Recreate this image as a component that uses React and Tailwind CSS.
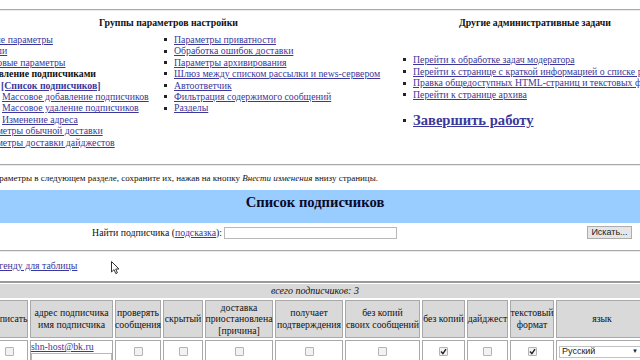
import React from "react";

const link = "text-[#3b379c] underline";

const Bullet = () => (
  <span className="w-[14px] h-[11.4px] shrink-0 flex items-center pl-[4px]">
    <span className="w-[3px] h-[3px] bg-[#222]" />
  </span>
);

const Cb = ({ checked }) => (
  <span className="w-[9px] h-[9px] border border-[#b4b4b4] bg-[#f2f2f2] rounded-[1px] flex items-center justify-center">
    {checked && (
      <svg width="7" height="7" viewBox="0 0 7 7">
        <path d="M1 3.6 L2.9 5.6 L6 1.2" stroke="#222" strokeWidth="1.4" fill="none" />
      </svg>
    )}
  </span>
);

const Hr = ({ className = "" }) => (
  <div className={"h-[2px] border-t border-[#a8a8a8] border-b border-b-[#ececec] " + className} />
);

const headers = [
  ["отписать"],
  ["адрес подписчика", "имя подписчика"],
  ["проверять", "сообщения"],
  ["скрытый"],
  ["доставка", "приостановлена", "[причина]"],
  ["получает", "подтверждения"],
  ["без копий", "своих сообщений"],
  ["без копий"],
  ["дайджест"],
  ["текстовый", "формат"],
  ["язык"],
];

const checks = [false, null, false, false, false, false, false, true, false, true, null];

export default function App() {
  return (
    <div className="w-[640px] h-[360px] overflow-hidden bg-white relative font-['Liberation_Serif',serif] text-[9.8px] leading-[11.4px] text-[#111]">
      <div className="h-[9px]" />
      <Hr className="w-[640px]" />

      {/* top navigation */}
      <div className="flex -ml-[30px] mt-[6px]">
        <div className="w-[429px] shrink-0">
          <div className="w-[397px] text-center font-bold leading-[12px]">Группы параметров настройки</div>
          <div className="flex mt-[5px]">
            <ul className="w-[190px] shrink-0 pl-[6px] whitespace-nowrap">
              <li><a className={link}>Общие параметры</a></li>
              <li><a className={link}>Пароли</a></li>
              <li><a className={link}>Языковые параметры</a></li>
              <li>
                <span className="font-bold">Управление подписчиками</span>
                <ul className="pl-[26px]">
                  <li className="-ml-[1px]"><a className={link + " font-bold"}>[Список подписчиков]</a></li>
                  <li><a className={link}>Массовое добавление подписчиков</a></li>
                  <li><a className={link}>Массовое удаление подписчиков</a></li>
                  <li><a className={link}>Изменение адреса</a></li>
                </ul>
              </li>
              <li><a className={link}>Параметры обычной доставки</a></li>
              <li><a className={link}>Параметры доставки дайджестов</a></li>
            </ul>
            <ul className="w-[239px] shrink-0 whitespace-nowrap">
              {[
                "Параметры приватности",
                "Обработка ошибок доставки",
                "Параметры архивирования",
                "Шлюз между списком рассылки и news-сервером",
                "Автоответчик",
                "Фильтрация содержимого сообщений",
                "Разделы",
              ].map((t) => (
                <li key={t} className="flex">
                  <Bullet />
                  <a className={link}>{t}</a>
                </li>
              ))}
            </ul>
          </div>
        </div>
        <div className="w-[272px] shrink-0">
          <div className="text-center font-bold leading-[12px]">Другие административные задачи</div>
          <ul className="mt-[25px] leading-[11.7px] whitespace-nowrap">
            {[
              "Перейти к обработке задач модератора",
              "Перейти к странице с краткой информацией о списке рассылки",
              "Правка общедоступных HTML-страниц и текстовых файлов",
              "Перейти к странице архива",
            ].map((t) => (
              <li key={t} className="flex">
                <Bullet />
                <a className={link}>{t}</a>
              </li>
            ))}
          </ul>
          <div className="flex items-center mt-[11px]">
            <Bullet />
            <a className={link + " text-[14.6px] leading-[17px] font-bold"}>Завершить работу</a>
          </div>
        </div>
      </div>

      <Hr className="w-[640px] mt-[16px]" />

      <p className="mt-[6px] text-[9px] leading-[12px] whitespace-nowrap -ml-[49px]">
        Измените параметры в следующем разделе, сохраните их, нажав на кнопку <em>Внести изменения</em> внизу страницы.
      </p>

      <div className="mt-[6px] h-[33px] bg-[#99ccff] pt-[4px] text-center">
        <span className="text-[14.6px] leading-[17px] font-bold text-[#0a0a2a] mr-[10px]">Список подписчиков</span>
      </div>

      <div className="mt-[3px] h-[13px] flex items-center">
        <div className="w-[222px] text-right leading-[12px] whitespace-nowrap">
          Найти подписчика (<a className={link}>подсказка</a>):
        </div>
        <div className="ml-[2px] w-[173px] h-[12px] border border-[#b8b8b8] bg-white" />
        <div className="ml-auto mr-[8px] h-[13px] w-[45px] border border-[#adadad] bg-[#e6e6e6] font-['Liberation_Sans',sans-serif] text-[9px] leading-[11px] text-center text-[#222]">
          Искать...
        </div>
      </div>

      <Hr className="w-[640px] mt-[11px]" />

      <div className="mt-[8px] leading-[12px] whitespace-nowrap -ml-[50px]">
        <a className={link}>Показать легенду для таблицы</a>
      </div>

      {/* table */}
      <div className="mt-[9px] -ml-[12px] w-[664px] border-t-2 border-l border-[#9a9a9a] pl-[1px] pt-[1px] bg-white">
        <div className="grid grid-cols-[38px_83px_46px_40px_68px_68px_75px_43px_41px_44px_92px] gap-[2px]">
          <div className="col-span-11 h-[14px] bg-[#d9d9d9] text-center italic text-[10px] leading-[13px] pr-[8px]">
            всего подписчиков: 3
          </div>
          {headers.map((h, i) => (
            <div
              key={i}
              className="h-[38px] bg-[#d9d9d9] border border-[#a9a9a9] flex flex-col items-center justify-center text-[9.8px] leading-[11.6px] whitespace-nowrap text-center"
            >
              {h.map((l) => (
                <span key={l}>{l}</span>
              ))}
            </div>
          ))}
          {checks.map((c, i) => {
            if (i === 1) {
              return (
                <div key={i} className="h-[30px] border border-[#a9a9a9] bg-white">
                  <a className={link + " leading-[12px] block"}>shn-host@bk.ru</a>
                  <div className="w-[81px] h-[16px] border border-[#b8b8b8] bg-white" />
                </div>
              );
            }
            if (i === 10) {
              return (
                <div key={i} className="h-[30px] border border-[#a9a9a9] bg-white pt-[5px] pl-[2px]">
                  <div className="w-[84px] h-[12px] border border-[#c2c2c2] bg-white flex items-center justify-between px-[2px] font-['Liberation_Sans',sans-serif] text-[9px] text-[#222]">
                    <span>Русский</span>
                    <span className="text-[6px] pr-[2px]">▼</span>
                  </div>
                </div>
              );
            }
            return (
              <div key={i} className="h-[30px] border border-[#a9a9a9] bg-white flex justify-center pt-[6px]">
                <Cb checked={c} />
              </div>
            );
          })}
        </div>
      </div>

      {/* mouse cursor */}
      <svg className="absolute left-[111px] top-[261px]" width="10" height="14" viewBox="0 0 10 14">
        <path d="M0.5 0.5 L0.5 11 L3 8.6 L4.8 12.6 L6.4 11.9 L4.7 8 L8 8 Z" fill="#fff" stroke="#333" strokeWidth="1" />
      </svg>
    </div>
  );
}
